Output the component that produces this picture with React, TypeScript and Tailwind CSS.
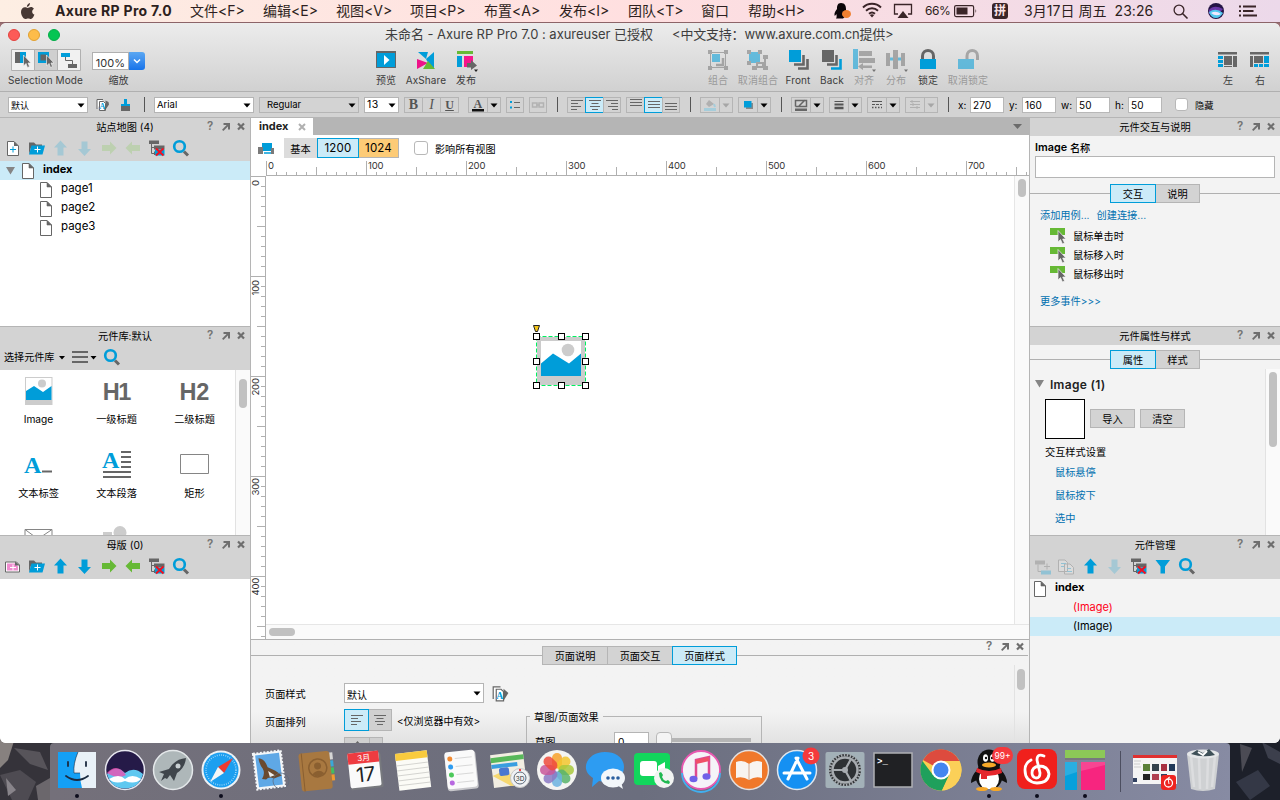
import React from 'react';

const BLUE = '#009dd9';
const DARK = '#666666';
const GREEN = '#66b935';

type Kids = { children?: React.ReactNode };

/* ---------- shared pieces ---------- */

function Slot({ c, children }: Kids & { c: string }) {
  return <div className={'shrink-0 ' + c}>{children}</div>;
}

function Ico({ b, children }: Kids & { b: [number, number, number, number] }) {
  return (
    <svg className="block shrink-0" width={b[2]} height={b[3]} viewBox={b.join(' ')} fill="none">
      {children}
    </svg>
  );
}

const MiniPage = () => (
  <svg className="block shrink-0" width="12" height="16" viewBox="0 0 12 16">
    <path d="M.5 .5H7L11.5 5V15.5H.5Z" fill="#fff" stroke={DARK} />
    <path d="M7 .5V5H11.5Z" fill={DARK} stroke={DARK} strokeWidth=".6" />
  </svg>
);

const WinButtons = () => (
  <Ico b={[0, 0, 48, 18]}>
    <text x="5" y="12" fontSize="11.500" fontWeight="600" fill="#757575">?</text>
    <path d="M20.700 12.300L26 7" stroke="#6e6e6e" strokeWidth="1.800" />
    <path d="M21.500 5H28V11.500H26V7H21.500Z" fill="#6e6e6e" />
    <path d="M36 5.500L42 11.500M42 5.500L36 11.500" stroke="#6e6e6e" strokeWidth="2.200" />
  </Ico>
);

function TitleBar({ children }: Kids) {
  return (
    <div className="flex h-[18px] shrink-0 items-center bg-[#d3d3d3] pl-12">
      <div className="flex-1 text-center text-[10.200px] text-black">{children}</div>
      <WinButtons />
    </div>
  );
}

function ToolIcon({ children, faded }: Kids & { faded?: boolean }) {
  return (
    <svg className={faded ? 'block shrink-0 opacity-30' : 'block shrink-0'} width="24" height="25" viewBox="-12 -12.5 24 25" fill="none">
      {children}
    </svg>
  );
}

const NewPage = () => (
  <ToolIcon>
    <path d="M-4.500 -7H2L6.500 -2.500V7H-4.500Z" fill="#fff" stroke={DARK} />
    <path d="M2 -7V-2.500H6.500Z" fill={DARK} />
    <path d="M-2 1H4M1 -2V4" stroke={BLUE} />
  </ToolIcon>
);
const NewMaster = () => (
  <ToolIcon>
    <path d="M-6.500 -4.500H4.500L7.500 -1.500V5.500H-6.500Z" fill="#fff" stroke={DARK} />
    <path d="M-5 -3H3.500L6 0V4H-5Z" fill="#f08cd0" />
    <path d="M3 -5V-1H8Z" fill={DARK} />
    <path d="M-2 1H4M1 -2V4" stroke="#fff" />
  </ToolIcon>
);
const NewFolder = () => (
  <ToolIcon>
    <path d="M-7 -6H-2L0 -4H6V-1H-5L-7 6Z" fill={DARK} />
    <path d="M-4.500 -3H9L6.500 6H-7Z" fill={BLUE} />
    <path d="M-1.500 1H4.500M1.500 -2V4" stroke="#fff" />
  </ToolIcon>
);
const Up = ({ off }: { off?: boolean }) => (
  <ToolIcon><path d="M.5 -8L7 -1H3.500V7H-2.500V-1H-6Z" fill={off ? '#a5c8d4' : BLUE} /></ToolIcon>
);
const Down = ({ off }: { off?: boolean }) => (
  <ToolIcon><path d="M.5 7.500L7 .5H3.500V-7H-2.500V.5H-6Z" fill={off ? '#a5c8d4' : BLUE} /></ToolIcon>
);
const Right = ({ off }: { off?: boolean }) => (
  <ToolIcon><path d="M8.500 -.5L2 -7V-3.500H-6V2.500H2V6Z" fill={off ? '#bdd0b0' : GREEN} /></ToolIcon>
);
const Left = ({ off }: { off?: boolean }) => (
  <ToolIcon><path d="M-6.500 -.5L0 -7V-3.500H8V2.500H0V6Z" fill={off ? '#bdd0b0' : GREEN} /></ToolIcon>
);
const Delete = () => (
  <ToolIcon>
    <path d="M-7 -8H3V-4.500H-7Z" fill={DARK} />
    <path d="M-4.500 -4.500V5H-2M-4.500 -1H-1" stroke={DARK} />
    <path d="M-2 -3H8.500V1H-2ZM-2 3H0V6.500H-2Z" fill={DARK} />
    <path d="M-1 1H8.500V7H-1Z" fill={BLUE} />
    <path d="M0 0L7.500 7M7.500 0L0 7" stroke="#f01020" strokeWidth="2" />
  </ToolIcon>
);
const Find = () => (
  <ToolIcon>
    <path d="M4 3L8 7" stroke={DARK} strokeWidth="3" />
    <circle cx="-.5" cy="-2" r="5.300" stroke={BLUE} strokeWidth="2.600" />
  </ToolIcon>
);

const Bar = ({ children }: Kids) => (
  <div className="flex h-[25px] shrink-0 items-center bg-[#d3d3d3]">{children}</div>
);

/* ---------- macOS menu bar ---------- */

function MenuBar() {
  return (
    <div className="flex h-[23px] shrink-0 items-center border-b border-[#8c6468] bg-linear-to-r from-[#fdeee3] via-[#ffdfe0] to-[#ecd9ea] text-[14px] text-[#2d1f20]">
      <Slot c="w-[55px] pl-[20px]">
        <svg width="15" height="17" viewBox="0 0 15 17" fill="#473834">
          <path d="M10 0C10 2 8.600 3.800 6.900 3.900C6.700 2.200 8.300 .3 10 0ZM1 9C1 5.800 3 4.200 4.900 4.200C6.100 4.200 6.900 4.900 7.700 4.900C8.500 4.900 9.500 4.100 11 4.100C12 4.100 13.200 4.700 13.900 5.700C11.400 7.200 11.800 10.600 14.400 11.600C13.800 13.400 12.400 16 10.900 16C9.900 16 9.500 15.400 8.200 15.400C6.900 15.400 6.400 16 5.500 16C3.500 16 1 12.400 1 9Z" />
        </svg>
      </Slot>
      <Slot c="w-[135px] text-[14px] font-bold tracking-[0.300px]">Axure RP Pro 7.0</Slot>
      <Slot c="w-[73px]">文件&lt;F&gt;</Slot>
      <Slot c="w-[73px]">编辑&lt;E&gt;</Slot>
      <Slot c="w-[74px]">视图&lt;V&gt;</Slot>
      <Slot c="w-[74px]">项目&lt;P&gt;</Slot>
      <Slot c="w-[75px]">布置&lt;A&gt;</Slot>
      <Slot c="w-[69px]">发布&lt;I&gt;</Slot>
      <Slot c="w-[73px]">团队&lt;T&gt;</Slot>
      <Slot c="w-[47px]">窗口</Slot>
      <Slot c="w-[82px]">帮助&lt;H&gt;</Slot>
      <Ico b={[830, 0, 95, 22]}>
        <path d="M841 3C837.500 3 837 6 837 9C835.500 11 834 13 834.500 15.500C835 16 836 15 836.500 14C836.500 16 837 17 836 18.500H843L846 16V9C846 6 845 3 841 3Z" fill="#0b0508" />
        <ellipse cx="846.500" cy="14" rx="4.500" ry="4" fill="#f08030" />
        <path d="M863 7.500C868 2.500 876 2.500 881 7.500M866 10.700C869.500 7.500 874.500 7.500 878 10.700M869 13.700C871 12 873 12 875 13.700" stroke="#3a2528" strokeWidth="1.900" />
        <path d="M869.800 15Q872 13.300 874.200 15L872 17.500Z" fill="#3a2528" />
        <path d="M898 14H894.500V4.500H911.500V14H908" stroke="#3a2528" strokeWidth="1.300" />
        <path d="M903 11L908.500 18H897.500Z" fill="#3a2528" />
      </Ico>
      <Slot c="w-[29px] text-[12px] tracking-[-0.4px]">66%</Slot>
      <Ico b={[954, 0, 38, 22]}>
        <rect x="954.600" y="5.600" width="19" height="11" rx="1.500" stroke="#3a2528" strokeWidth="1.200" />
        <rect x="956.500" y="7.500" width="11" height="7" fill="#3a2528" />
        <path d="M975.500 9V13Q977 11 975.500 9Z" fill="#3a2528" />
      </Ico>
      <Slot c="w-[32px]">
        <div className="flex size-4 items-center justify-center rounded-[3px] bg-[#3a2528] text-[12px] font-bold text-[#fbe3e6]">拼</div>
      </Slot>
      <Slot c="w-[148px] tracking-[0.050px]">3月17日 周五&nbsp; 23:26</Slot>
      <Ico b={[1172, 0, 108, 22]}>
        <circle cx="1179" cy="10" r="4.900" stroke="#3a2528" strokeWidth="1.300" />
        <path d="M1182.500 13.500L1187.500 18.500" stroke="#3a2528" strokeWidth="1.600" />
        <circle cx="1216" cy="11" r="8" fill="#241445" />
        <path d="M1209 10Q1214 4 1223 9Q1220 14 1209 14Z" fill="#6a38a8" />
        <path d="M1209 12Q1216 7 1223 13Q1220 18 1216 18Q1211 18 1209 12Z" fill="#52c8ee" />
        <path d="M1211 13Q1216 10 1221 14Q1216 17 1211 13Z" fill="#f0e8ff" />
        <path d="M1239 6.500H1241M1243 6.500H1256M1239 11H1241M1243 11H1253.500M1239 15.500H1241M1243 15.500H1257" stroke="#3a2528" strokeWidth="1.800" />
      </Ico>
    </div>
  );
}

/* ---------- window title + main toolbar ---------- */

function Tool({ w, b, label, off, children }: Kids & { w: string; b: [number, number, number, number]; label: string; off?: boolean }) {
  return (
    <div className={'flex shrink-0 flex-col items-center ' + w}>
      <div className={off ? 'opacity-55' : ''}><Ico b={b}>{children}</Ico></div>
      <div className={'flex h-[15px] items-center justify-center text-[10px] tracking-[0.100px] ' + (off ? 'text-[#9a9a9a]' : 'text-[#3c3c3c]')}>{label}</div>
    </div>
  );
}

function Toolbar() {
  return (
    <div className="flex h-[69px] shrink-0 flex-col rounded-t-[6px] border-b border-[#b0b0b0] bg-linear-to-b from-[#ececec] to-[#d1d1d1]">
      <div className="flex h-[23px] items-center text-[13px] text-[#3e3e3e]">
        <div className="flex w-[385px] shrink-0 gap-2 pl-2">
          <div className="size-3 rounded-full border border-[#e2443f] bg-[#fc5b57]" />
          <div className="size-3 rounded-full border border-[#e0a032] bg-[#fdbc4a]" />
          <div className="size-3 rounded-full border border-[#04ac48] bg-[#05c553]" />
        </div>
        <Slot c="w-[287px] tracking-[-0.030px]">未命名 - Axure RP Pro 7.0 : axureuser 已授权</Slot>
        <Slot c="w-[300px] tracking-[-0.200px]">&lt;中文支持：www.axure.com.cn提供&gt;</Slot>
      </div>
      <div className="flex h-[45px]">
        <Tool w="w-[91px]" b={[0, 46, 91, 26]} label="Selection Mode">
          <path d="M11.500 49.500H80.500V70.500H11.500Z" fill="#f1f1f1" stroke="#b0b0b0" />
          <path d="M34.500 49.500H57.500V70.500H34.500Z" fill="#cfcfcf" stroke="#b0b0b0" />
          <path d="M15 52H20V63H15Z" fill={DARK} /><path d="M20 52H26V63H20Z" fill={BLUE} />
          <path d="M38 52H49V63H38Z" fill={BLUE} /><path d="M40.500 54.500H46.500V60.500H40.500Z" fill={DARK} />
          <path d="M23.500 55V66L26 63.500L27.500 67.500L29.500 66.500L28 63H31Z" fill={DARK} stroke="#eee" strokeWidth=".7" />
          <path d="M46.500 55V66L49 63.500L50.500 67.500L52.500 66.500L51 63H54Z" fill={DARK} stroke="#eee" strokeWidth=".7" />
          <path d="M61 53H70V57H61Z" fill={BLUE} /><path d="M65.500 57V60.500H72.500V64" stroke={DARK} /><path d="M68 64H77V68H68Z" fill={DARK} />
        </Tool>
        <div className="flex w-[55px] shrink-0 flex-col items-center">
          <div className="flex h-[29px] items-center">
            <div className="flex h-[18px] w-[53px] items-stretch text-[11px] text-[#333]">
              <div className="flex flex-1 items-end justify-end border border-[#b0b0b0] bg-white pr-[3px]">100%</div>
              <div className="flex w-4 items-center justify-center rounded-r-[3px] bg-linear-to-b from-[#5aa7f2] to-[#1573ea]">
                <Ico b={[0, 0, 8, 6]}><path d="M1 1.500L4 4.500L7 1.500" stroke="#fff" strokeWidth="1.500" /></Ico>
              </div>
            </div>
          </div>
          <div className="-mt-[3px] flex h-[15px] items-center text-[10px] text-[#3c3c3c]">缩放</div>
        </div>
        <Slot c="w-[220px]" />
        <Tool w="w-10" b={[366, 46, 40, 26]} label="预览">
          <path d="M376 51H396V68H376Z" fill={BLUE} /><path d="M376 51H396V53H376Z" fill={DARK} /><path d="M376.500 51.500H395.500V67.500H376.500Z" stroke={DARK} />
          <path d="M384 55V65L389.500 60Z" fill="#fff" />
        </Tool>
        <Tool w="w-10" b={[406, 46, 40, 26]} label="AxShare">
          <path d="M418 52H428L426 59Z" fill={BLUE} /><path d="M426 59L434 52V69L427 61Z" fill={BLUE} />
          <path d="M417 59L428 63L417 69Z" fill="#ee1289" /><path d="M428 61L435 69H423Z" fill={GREEN} />
        </Tool>
        <Tool w="w-10" b={[446, 46, 40, 26]} label="发布">
          <path d="M457 51H473V54H457Z" fill={GREEN} /><path d="M457 56H462V67H457Z" fill={BLUE} /><path d="M464 56H473V67H464Z" fill="#f5158c" />
          <path d="M467 63H471V60L477 65.500L471 70V67.500H467Z" fill={DARK} /><path d="M474 69.500H478L476 72Z" fill="#222" />
        </Tool>
        <Slot c="w-[212px]" />
        <Tool w="w-10" b={[698, 46, 40, 26]} label="组合" off>
          <path d="M710.500 52.500H725.500V67.500H710.500Z" stroke="#777" /><path d="M708 50H712V54H708ZM724 50H728V54H724ZM708 66H712V70H708ZM724 66H728V70H724Z" fill="#777" />
          <path d="M712 54H720V62H712Z" fill={BLUE} /><path d="M716 65H723V58" stroke="#777" strokeWidth="2.500" />
        </Tool>
        <Tool w="w-10" b={[738, 46, 40, 26]} label="取消组合" off>
          <path d="M749 52H760V63H749Z" fill={BLUE} /><path d="M747 50H751V54H747ZM758 50H762V54H758ZM747 61H751V65H747ZM763 55H768V59H763ZM752 66H757V70H752ZM763 66H768V70H763Z" fill="#777" />
          <path d="M754 67H765V57M757 67V63H763V67" stroke="#777" strokeWidth="2" />
        </Tool>
        <Tool w="w-10" b={[778, 46, 40, 26]} label="Front">
          <path d="M789 50H801V62H789Z" fill={BLUE} />
          <path d="M794 64.500H803.500V55M798 68.500H807.500V59" stroke={DARK} strokeWidth="2.600" />
        </Tool>
        <Tool w="w-[28px]" b={[818, 46, 28, 26]} label="Back">
          <path d="M822 50H834V62H822Z" fill={DARK} />
          <path d="M827 64.500H836.500V55" stroke={DARK} strokeWidth="2.600" /><path d="M831 68.500H840.500V59" stroke={BLUE} strokeWidth="2.600" />
        </Tool>
        <Tool w="w-[36px]" b={[846, 46, 36, 26]} label="对齐" off>
          <path d="M853 49H858V69H853Z" fill={BLUE} /><path d="M859 51H872V56H859ZM859 58H875V63H859ZM858 66.500L863 63V65.500H872V68H863V70Z" fill="#777" /><path d="M872 69.500H876L874 72Z" fill="#222" />
        </Tool>
        <Tool w="w-[28px]" b={[882, 46, 28, 26]} label="分布" off>
          <path d="M886 53H890V66H886ZM893 50H898V69H893ZM901 53H905V66H901Z" fill="#777" /><path d="M890 59H893M898 59H901" stroke={BLUE} strokeWidth="3" /><path d="M904 69.500H908L906 72Z" fill="#222" />
        </Tool>
        <Tool w="w-[36px]" b={[910, 46, 36, 26]} label="锁定">
          <path d="M922.500 60V56C922.500 48.500 933.500 48.500 933.500 56V60" stroke={DARK} strokeWidth="3" /><path d="M920 59H936V69H920Z" fill={BLUE} />
        </Tool>
        <Tool w="w-[44px]" b={[946, 46, 44, 26]} label="取消锁定" off>
          <path d="M967 60V56C967 48.500 977.500 48.500 977.500 56V60" stroke="#777" strokeWidth="3" /><path d="M958 59H974V69H958Z" fill={BLUE} />
        </Tool>
        <Slot c="w-[222px]" />
        <Tool w="w-8" b={[1212, 46, 32, 26]} label="左">
          <path d="M1218 52H1237V54.500H1218ZM1224 56H1232V65H1224ZM1233 56H1237V67H1233ZM1224 66H1232V67H1224Z" fill={DARK} /><path d="M1218 56H1223V59H1218ZM1218 60H1223V63H1218ZM1218 64H1223V67H1218Z" fill={BLUE} />
        </Tool>
        <Tool w="w-8" b={[1244, 46, 32, 26]} label="右">
          <path d="M1250 52H1269V54.500H1250ZM1250 56H1253V67H1250ZM1254 56H1263V63H1254Z" fill={DARK} /><path d="M1264 56H1269V63H1264ZM1254 64H1258V67H1254ZM1259 64H1263V67H1259ZM1264 64H1269V67H1264Z" fill={BLUE} />
        </Tool>
      </div>
    </div>
  );
}

/* ---------- formatting bar ---------- */

const Caret = ({ off }: { off?: boolean }) => (
  <svg className="block shrink-0" width="8" height="5" viewBox="0 0 8 5"><path d="M.5 .5H7.500L4 4.500Z" fill={off ? '#a6a6a6' : '#000'} /></svg>
);

function Select({ c, children }: Kids & { c: string }) {
  return (
    <div className={'flex h-4 shrink-0 items-center justify-between border border-[#b5b5b5] pr-[2px] pt-px text-black ' + c}>
      <span>{children}</span>
      <Caret />
    </div>
  );
}

function Btn({ c, children }: Kids & { c: string }) {
  return <div className={'flex h-4 shrink-0 items-center justify-center border ' + c}>{children}</div>;
}

const Lines = ({ d, s = '#666' }: { d: string; s?: string }) => (
  <Ico b={[0, 0, 14, 14]}><path d={d} stroke={s} /></Ico>
);

function Split({ c, off, children }: Kids & { c: string; off?: boolean }) {
  return (
    <div className={'flex h-4 w-[33px] shrink-0 border border-[#b5b5b5] ' + c}>
      <div className="flex w-[19px] shrink-0 items-center justify-center border-r border-[#b5b5b5]">{children}</div>
      <div className="flex flex-1 items-center justify-center pt-px"><Caret off={off} /></div>
    </div>
  );
}

const Sep = ({ c }: { c: string }) => <div className={'h-[15px] w-px shrink-0 bg-[#555] ' + c} />;

const StyleIcon = () => (
  <Ico b={[0, 0, 14, 14]}>
    <path d="M1 11V1.500H7M3.500 3.500H7.500L9.500 5.500V12.500H3.500Z" stroke={DARK} fill="#fff" />
    <path d="M12.500 4L9.500 2.500V6L8 12.500L10 11L13 6.500Z" fill={DARK} />
    <text x="3.500" y="11" fontSize="8" fontWeight="700" fill={BLUE} fontFamily="Liberation Serif">A</text>
  </Ico>
);

function FormatBar() {
  const off = 'border-[#b5b5b5]';
  const on = 'border-[#009dd9] bg-[#cbebf8]';
  return (
    <div className="flex h-[26px] shrink-0 items-center border-b border-[#b5b5b5] bg-[#d3d3d3] pl-2">
      <Select c="w-20 bg-white pl-[2px] text-[9px]">默认</Select>
      <div className="ml-2 w-6"><StyleIcon /></div>
      <Ico b={[120, 98, 14, 14]}>
        <path d="M124 99H127V104H124Z" fill={BLUE} /><path d="M121 104H130V111H121Z" fill={DARK} /><path d="M121 104H130V106H121Z" fill={BLUE} />
      </Ico>
      <Sep c="ml-[10px]" />
      <Select c="ml-[9px] w-[100px] bg-white pl-[2px] text-[9.500px]">Arial</Select>
      <Select c="ml-[5px] w-[100px] pl-[7px] text-[9.500px]">Regular</Select>
      <Select c="ml-[5px] w-[35px] bg-white pl-[2px] text-[10.500px] tracking-[0.500px]">13</Select>
      <Btn c={'ml-[5px] w-[19px] ' + off}><b className="font-['Liberation_Serif'] text-[14px] text-[#555]">B</b></Btn>
      <Btn c={'-ml-px w-[19px] ' + off}><i className="font-['Liberation_Serif'] text-[14px] text-[#555]">I</i></Btn>
      <Btn c={'-ml-px w-[19px] ' + off}><u className="font-['Liberation_Serif'] text-[12px] font-bold text-[#555]">U</u></Btn>
      <Split c="ml-[9px]">
        <Ico b={[0, 0, 14, 14]}><text x="2.500" y="9.500" fontSize="12" fontWeight="700" fill="#555" fontFamily="Liberation Serif">A</text><path d="M1 11H13V13.500H1Z" fill="#111" /></Ico>
      </Split>
      <Btn c={'ml-[5px] w-[18px] ' + off}>
        <Ico b={[0, 0, 14, 14]}><path d="M2 4H4M2 9.500H4" stroke={BLUE} strokeWidth="2.200" /><path d="M6 4.500H12M6 9.500H12" stroke={DARK} /></Ico>
      </Btn>
      <Btn c={'ml-[5px] w-[18px] ' + off}>
        <Ico b={[0, 0, 14, 14]}><path d="M1.500 5H6V9H1.500ZM8 5H12.500V9H8ZM5 7H9" stroke="#b2b2b2" strokeWidth="1.500" /></Ico>
      </Btn>
      <Sep c="ml-[10px]" />
      <Btn c={'ml-[9px] w-[19px] ' + off}><Lines d="M1 2.500H13M1 5.500H8M1 8.500H11M1 11.500H7" /></Btn>
      <Btn c={'-ml-px w-[19px] ' + on}><Lines d="M1 2.500H13M3.500 5.500H10.500M2 8.500H12M4 11.500H10" /></Btn>
      <Btn c={'-ml-px w-[18px] ' + off}><Lines d="M1 2.500H13M6 5.500H13M3 8.500H13M7 11.500H13" /></Btn>
      <Btn c={'ml-[5px] w-[19px] ' + off}><Lines d="M1 1.500H13M1 4.500H13M1 7.500H13" /></Btn>
      <Btn c={'-ml-px w-[19px] ' + on}><Lines d="M1 3.500H13M1 6.500H13M1 9.500H13" /></Btn>
      <Btn c={'-ml-px w-[18px] ' + off}><Lines d="M1 5.500H13M1 8.500H13M1 11.500H13" /></Btn>
      <Sep c="ml-[10px]" />
      <Split c="ml-[9px]" off>
        <Ico b={[0, 0, 14, 14]}><path d="M6 2L11 6L6 9L3 6Z" fill="#b0b0b0" /><path d="M1 10H13V13H1Z" fill="#a5cddb" /><path d="M11 6L12 9" stroke="#a5cddb" strokeWidth="2" /></Ico>
      </Split>
      <Split c="ml-[5px]">
        <Ico b={[0, 0, 14, 14]}><path d="M5 5H12V11H5Z" fill="#888" /><path d="M3 3H10.500V9.500H3Z" fill={BLUE} /></Ico>
      </Split>
      <Sep c="ml-[10px]" />
      <Split c="ml-[9px]">
        <Ico b={[0, 0, 14, 14]}><path d="M1.500 8.500V2.500H12.500V8.500H1.500M5 8L11 2" stroke={DARK} strokeWidth="1.500" /><path d="M1 10.500H13V13H1Z" fill={DARK} /></Ico>
      </Split>
      <Split c="ml-[5px]">
        <Ico b={[0, 0, 14, 14]}><path d="M2.500 3.500H11.500" stroke="#555" /><path d="M2.500 6.500H11.500" stroke="#555" strokeWidth="2" /><path d="M2.500 10H11.500" stroke="#555" strokeWidth="2.600" /></Ico>
      </Split>
      <Split c="ml-[5px]">
        <Ico b={[0, 0, 14, 14]}><path d="M2 3.500H12" stroke="#555" /><path d="M2 6.500H12" stroke="#555" strokeDasharray="3 1" /><path d="M2 9.500H12" stroke="#555" strokeWidth="1.500" strokeDasharray="1.500 1.500" /></Ico>
      </Split>
      <Split c="ml-[5px]" off>
        <Ico b={[0, 0, 14, 14]}><path d="M2 3.500H12M2 6.500H12M2 9.500H12M4 2V5M9 8V11M5 5V8" stroke="#b0b0b0" /></Ico>
      </Split>
      <Sep c="ml-[10px]" />
      <div className="flex items-center text-[10px] text-black">
        <Slot c="ml-[9px] w-3">x:</Slot><Field>270</Field>
        <Slot c="ml-[5px] w-[13px]">y:</Slot><Field>160</Field>
        <Slot c="ml-[5px] w-[15px]">w:</Slot><Field>50</Field>
        <Slot c="ml-[5px] w-[13px]">h:</Slot><Field>50</Field>
        <div className="ml-[13px] size-[13px] shrink-0 rounded-[3px] border border-[#b8b8b8] bg-white" />
        <Slot c="ml-[7px] pt-[2px] text-[9.200px]">隐藏</Slot>
      </div>
    </div>
  );
}

function Field({ children }: Kids) {
  return <div className="flex h-4 w-[34px] shrink-0 items-center border border-[#b8b8b8] bg-white pl-[2px] text-[10px] tracking-[0.100px]">{children}</div>;
}

/* ---------- left column ---------- */

function LibCell({ w, label, children }: Kids & { w: string; label: string }) {
  return (
    <div className={'flex h-[74px] shrink-0 flex-col items-center pt-px ' + w}>
      <svg className="block" width="48" height="39" viewBox="-24 -19 48 39" fill="none">{children}</svg>
      <div className="flex h-[19px] items-center text-[10.200px] text-black">{label}</div>
    </div>
  );
}

const TreePage = ({ name }: { name: string }) => (
  <div className="flex h-[19px] items-center pl-10"><MiniPage /><span className="-mt-[2px] ml-[9px]">{name}</span></div>
);

function LeftColumn() {
  return (
    <div className="flex w-[251px] shrink-0 flex-col border-r border-[#b5b5b5] bg-white">
      <TitleBar>站点地图 (4)</TitleBar>
      <Bar><NewPage /><NewFolder /><Up off /><Down off /><Right off /><Left off /><Delete /><Find /></Bar>
      <div className="flex h-[165px] shrink-0 flex-col text-[11.500px] text-black">
        <div className="flex h-[19px] items-center bg-[#cbebf8] pl-[6px] font-bold">
          <svg className="mr-[7px] block" width="9" height="8"><path d="M0 0H9L4.500 7.500Z" fill="#858585" /></svg>
          <MiniPage /><span className="-mt-[2px] ml-[9px] text-[11px]">index</span>
        </div>
        <TreePage name="page1" /><TreePage name="page2" /><TreePage name="page3" />
      </div>
      <div className="h-px shrink-0 bg-[#b5b5b5]" />
      <TitleBar>元件库:默认</TitleBar>
      <Bar>
        <Slot c="w-[57px] pl-1 text-[10.100px]">选择元件库</Slot>
        <Ico b={[57, 345, 43, 25]}>
          <path d="M59 356H65L62 359.500ZM90.500 356H96.500L93.500 359.500Z" fill="#000" /><path d="M72 352H88M72 357H88M72 362H88" stroke={DARK} strokeWidth="2" />
        </Ico>
        <div className="-ml-px"><Find /></div>
      </Bar>
      <div className="flex h-[165px] shrink-0 overflow-hidden">
        <div className="flex w-[235px] flex-wrap content-start">
          <LibCell w="w-[77px]" label="Image">
            <path d="M-14 -13H13.500V15H-14Z" fill="#ccc" /><path d="M-13 -12H12.500V10H-13Z" fill="#fff" /><circle cx="3" cy="-6.500" r="4" fill="#ccc" />
            <path d="M-13 1L-5 -4L4 2L12.500 -4V10H-13Z" fill={BLUE} />
          </LibCell>
          <LibCell w="w-[79px]" label="一级标题"><text y="9.500" x="-.7" textAnchor="middle" fontSize="23.500" fontWeight="700" fill={DARK} fontFamily="Liberation Sans" letterSpacing="-1.500">H1</text></LibCell>
          <LibCell w="w-[77px]" label="二级标题"><text y="9.500" x="-.7" textAnchor="middle" fontSize="23.500" fontWeight="700" fill={DARK} fontFamily="Liberation Sans" letterSpacing="-.3">H2</text></LibCell>
          <LibCell w="w-[77px]" label="文本标签"><text x="-15" y="9" fontSize="24" fontWeight="700" fill={BLUE} fontFamily="Liberation Serif">A</text><path d="M3 7.500H13" stroke={DARK} strokeWidth="2" /></LibCell>
          <LibCell w="w-[79px]" label="文本段落"><text x="-15" y="4" fontSize="24" fontWeight="700" fill={BLUE} fontFamily="Liberation Serif">A</text><path d="M4 -12H14M4 -7H14M4 -2H14M4 3H14M-14 8H14M-14 13H14" stroke={DARK} strokeWidth="2" /></LibCell>
          <LibCell w="w-[77px]" label="矩形"><path d="M-14.500 -9.500H13.500V9.500H-14.500Z" fill="#fff" stroke="#858585" /></LibCell>
          <LibCell w="w-[77px]" label=""><path d="M-14 -8.500H13V11H-14ZM-14 -8.500L-1 1L13 -8.500" stroke="#858585" /></LibCell>
          <LibCell w="w-[79px]" label=""><circle cx="3" cy="-5.500" r="6.500" fill="#ccc" /><path d="M-14 -6H-5V4H-14Z" fill="#ccc" /></LibCell>
        </div>
        <div className="w-[15px] border-l border-[#e2e2e2] bg-[#fafafa] pl-[3px] pt-[9px]"><div className="h-[29px] w-2 rounded-full bg-[#c1c1c1]" /></div>
      </div>
      <div className="h-px shrink-0 bg-[#b5b5b5]" />
      <TitleBar>母版 (0)</TitleBar>
      <Bar><NewMaster /><NewFolder /><Up /><Down /><Right /><Left /><Delete /><Find /></Bar>
    </div>
  );
}

/* ---------- centre column ---------- */

const H_TICKS = Array.from({ length: 77 }, (_, i) => i);
const V_TICKS = Array.from({ length: 47 }, (_, i) => i);

function TabLine({ children }: Kids) {
  return (
    <div className="flex h-[19px] shrink-0 items-center">
      <div className="h-px flex-1 bg-[#b0b0b0]" />
      {children}
      <div className="h-px flex-1 bg-[#b0b0b0]" />
    </div>
  );
}

function Tab({ w, on, children }: Kids & { w: string; on?: boolean }) {
  return (
    <div className={'flex h-[19px] shrink-0 items-center justify-center border pt-[2px] text-[10.200px] text-black ' + w + (on ? ' z-10 border-[#009dd9] bg-[#cbebf8]' : ' border-[#b5b5b5] bg-[#d3d3d3]')}>
      {children}
    </div>
  );
}

function Centre() {
  return (
    <div className="flex w-[778px] shrink-0 flex-col bg-white">
      <div className="flex h-[17px] shrink-0 items-center bg-[#b5b5b5]">
        <div className="flex h-full w-[62px] items-center bg-white pl-2 text-[11px] font-bold text-[#222]">
          index
          <svg className="ml-[10px] block" width="8" height="8"><path d="M1 1L7 7M7 1L1 7" stroke="#b0b0b0" strokeWidth="2" /></svg>
        </div>
        <svg className="ml-auto mr-[7px] block" width="9" height="5"><path d="M0 0H9L4.500 5Z" fill="#6b6b6b" /></svg>
      </div>
      <div className="flex h-[26px] shrink-0 items-center pl-[7px] text-[12px] text-black">
        <Ico b={[258, 141, 16, 13]}>
          <path d="M262 142H272V150H262Z" fill={BLUE} /><path d="M264 152H271" stroke={BLUE} strokeWidth="1.500" /><path d="M258 146H263V153H258ZM271 147H274V153H271Z" fill="#7a7a7a" />
        </Ico>
        <div className="ml-[10px] flex h-[20px] w-[33px] items-center justify-center bg-[#dcdcdc] pt-[2px] text-[10.200px]">基本</div>
        <div className="flex h-[20px] w-[42px] items-center justify-center border border-[#009dd9] bg-[#cbebf8] pt-px text-[11.500px] tracking-[0.200px]">1200</div>
        <div className="flex h-[20px] w-[40px] items-center justify-center border border-l-0 border-[#b5b5b5] bg-[#fdcb76] pt-px text-[11.500px] tracking-[0.200px]">1024</div>
        <div className="ml-[15px] size-[14px] rounded-[3px] border border-[#b8b8b8] bg-white" />
        <span className="ml-[7px] pt-[3px] text-[10.100px]">影响所有视图</span>
      </div>
      <div className="h-[15px] shrink-0 pl-[15px]">
        <Ico b={[0, 0, 763, 15]}>
          <path d="M0 14.500H763" stroke="#b0b0b0" />
          {H_TICKS.map((i) => (
            <path key={i} d={`M${i * 10 + 0.5} ${i % 10 === 0 ? 0 : i % 5 === 0 ? 6 : 11}V15`} stroke="#b0b0b0" />
          ))}
          {[0, 100, 200, 300, 400, 500, 600, 700].map((n) => (
            <text key={n} x={n + 2} y="8" fontSize="9.500" fill="#333" letterSpacing="-.2">{n}</text>
          ))}
        </Ico>
      </div>
      <div className="flex h-[463px] shrink-0">
        <Ico b={[0, 0, 15, 463]}>
          <path d="M14.500 0V463" stroke="#b0b0b0" />
          {V_TICKS.map((i) => (
            <path key={i} d={`M${i % 10 === 0 ? 0 : i % 5 === 0 ? 6 : 10} ${i * 10 + 0.5}H15`} stroke="#b0b0b0" />
          ))}
          <text transform="translate(8 10) rotate(-90)" fontSize="9.500" fill="#333" letterSpacing="-.2">0</text>
          {[100, 200, 300, 400].map((n) => (
            <text key={n} transform={`translate(8 ${n + 19.5}) rotate(-90)`} fontSize="9.500" fill="#333" letterSpacing="-.2">{n}</text>
          ))}
        </Ico>
        <div className="flex flex-1 flex-col">
          <div className="flex h-[448px] shrink-0">
            <div className="relative flex-1 bg-white">
              <svg className="absolute left-[262px] top-[144px]" width="70" height="72" viewBox="528 320 70 72" fill="none">
                <path d="M533.500 325.500H539.500L537.500 331.500H535.500Z" fill="#f5c518" stroke="#222" />
                <path d="M536 336H586V386H536Z" fill="#ccc" /><path d="M541 341H581V376H541Z" fill="#fff" /><circle cx="568" cy="350" r="6.300" fill="#ccc" />
                <path d="M541 363.500L553 353.500L569 363.500L581 353.500V376H541Z" fill={BLUE} />
                <path d="M536.500 336.500H585.500V385.500H536.500Z" stroke="#fff" /><path d="M536.500 336.500H585.500V385.500H536.500Z" stroke="#00f060" strokeDasharray="4 2" />
                {[[536, 336], [561, 336], [585, 336], [536, 361], [585, 361], [536, 385], [561, 385], [585, 385]].map(([x, y]) => (
                  <rect key={x + '-' + y} x={x - 2.5} y={y - 2.5} width="6" height="6" fill="#fff" stroke="#000" />
                ))}
              </svg>
            </div>
            <div className="w-[15px] border-l border-[#e6e6e6] bg-[#fafafa] pl-[3px] pt-[3px]"><div className="h-[18px] w-2 rounded-full bg-[#c1c1c1]" /></div>
          </div>
          <div className="h-[15px] border-t border-[#e6e6e6] bg-[#fafafa] pl-[3px] pt-[3px]"><div className="h-2 w-[26px] rounded-full bg-[#c1c1c1]" /></div>
        </div>
      </div>
      <PageInspector />
    </div>
  );
}

function PageInspector() {
  return (
    <div className="flex flex-1 flex-col overflow-hidden border-t border-[#b0b0b0] bg-linear-to-b from-[#f3f3f3] from-70% to-[#e2e2e2] text-[10.200px] text-black">
      <div className="flex h-[6px] shrink-0 justify-end"><div className="-mt-[2px] h-[18px]"><WinButtons /></div></div>
      <div className="pr-px"><TabLine><Tab w="w-[66px]">页面说明</Tab><Tab w="-ml-px w-[66px]">页面交互</Tab><Tab w="-ml-px w-[65px]" on>页面样式</Tab></TabLine></div>
      <div className="flex flex-1">
        <div className="flex w-[275px] shrink-0 flex-col pl-[14px] pt-[18px]">
          <div className="flex h-5 items-center">
            <Slot c="w-[79px] pt-[3px]">页面样式</Slot>
            <div className="flex h-5 w-[140px] items-center justify-between border border-[#b5b5b5] bg-white pl-[2px] pr-[2px] pt-px"><span className="pt-[2px] text-[10px]">默认</span><Caret /></div>
            <div className="ml-2"><svg width="17" height="17" viewBox="0 0 14 14" fill="none"><path d="M1 11.500V1.500H7M3.500 3.500H7.500L9.500 5.500V13H3.500Z" stroke={DARK} fill="#fff" /><path d="M9.500 3L13.500 6.500L9.500 13Z" fill={DARK} /><text x="3.500" y="11.500" fontSize="8" fontWeight="700" fill={BLUE} fontFamily="Liberation Serif">A</text></svg></div>
          </div>
          <div className="mt-[6px] flex h-[22px] items-center">
            <Slot c="w-[79px] pt-[5px]">页面排列</Slot>
            <div className="z-10 flex h-[22px] w-[25px] items-center justify-center border border-[#009dd9] bg-[#cbebf8]"><Lines d="M1 2.500H13M1 5.500H8M1 8.500H11M1 11.500H7" /></div>
            <div className="-ml-px flex h-[22px] w-[24px] items-center justify-center border border-[#b5b5b5] bg-[#d0d0d0]"><Lines d="M1 2.500H13M3.500 5.500H10.500M2 8.500H12M4 11.500H10" /></div>
            <span className="ml-[5px] pt-px text-[10px]">&lt;仅浏览器中有效&gt;</span>
          </div>
          <div className="ml-[79px] mt-[6px] flex h-4 w-[39px] shrink-0 border border-[#b5b5b5] bg-[#d0d0d0]"><div className="flex w-[25px] justify-center border-r border-[#b5b5b5] pt-[3px]"><svg width="9" height="6"><path d="M4.500 0L9 5H0Z" fill="#666" /></svg></div></div>
        </div>
        <div className="flex w-[236px] shrink-0 flex-col pt-[45px]">
          <div className="flex h-[12px] items-center"><div className="h-px w-1 bg-[#b5b5b5]" /><span className="px-1 pt-[2px]">草图/页面效果</span><div className="h-px flex-1 bg-[#b5b5b5]" /></div>
          <div className="-mt-[6px] flex h-[30px] shrink-0 items-start border-x border-[#b5b5b5] pl-2 pt-[16px]">
            <Slot c="w-[79px] pt-[5px]">草图</Slot>
            <div className="h-5 w-[35px] border border-[#b5b5b5] bg-white pl-[3px] pt-[4px]">0</div>
            <div className="ml-[7px] h-4 w-4 rounded-[4px] border border-[#b8b8b8] bg-[#f4f4f4]" />
            <div className="mt-[6px] h-1 w-[79px] bg-[#b5b5b5]" />
          </div>
        </div>
        <div className="ml-auto w-[15px] border-l border-[#e2e2e2] pl-[2px] pt-1"><div className="h-[21px] w-2 rounded-full bg-[#c1c1c1]" /></div>
      </div>
    </div>
  );
}

/* ---------- right column ---------- */

function EventRow({ children }: Kids) {
  return (
    <div className="flex h-[19px] items-center pl-5">
      <Ico b={[0, 0, 18, 18]}>
        <path d="M0 0H15V7H0Z" fill={GREEN} /><path d="M8 2.500V14L10.500 11.500L12.500 16L14.500 15L12.700 11H16Z" fill={DARK} stroke="#f3f3f3" strokeWidth=".7" />
      </Ico>
      <span className="-mt-px ml-[5px]">{children}</span>
    </div>
  );
}

function RightColumn() {
  return (
    <div className="flex w-[251px] shrink-0 flex-col border-l border-[#b5b5b5] bg-[#f3f3f3] text-[10.200px] text-black">
      <TitleBar>元件交互与说明</TitleBar>
      <div className="flex h-[190px] shrink-0 flex-col">
        <div className="flex h-5 items-center pl-[5px] pt-[4px]"><b className="text-[10.800px] font-semibold">Image</b>&nbsp;<span className="font-medium">名称</span></div>
        <div className="mx-[5px] h-[22px] border border-[#b5b5b5] bg-white" />
        <div className="h-[6px]" />
        <TabLine><Tab w="w-[46px]" on>交互</Tab><Tab w="-ml-px w-[45px]">说明</Tab></TabLine>
        <div className="flex h-6 items-center gap-[7px] pl-[10px] pt-px text-[#0070b0]"><span>添加用例...</span><span>创建连接...</span></div>
        <EventRow>鼠标单击时</EventRow><EventRow>鼠标移入时</EventRow><EventRow>鼠标移出时</EventRow>
        <div className="pl-[10px] pt-[12px] text-[#0070b0]">更多事件&gt;&gt;&gt;</div>
      </div>
      <div className="h-px shrink-0 bg-[#b5b5b5]" />
      <TitleBar>元件属性与样式</TitleBar>
      <div className="h-[5px] shrink-0" />
      <TabLine><Tab w="w-[46px]" on>属性</Tab><Tab w="-ml-px w-[45px]">样式</Tab></TabLine>
      <div className="flex h-[166px] shrink-0">
        <div className="flex-1">
          <div className="flex h-[30px] items-center pl-[5px] text-[12px] font-semibold tracking-[0.300px] text-[#222]">
            <svg className="mr-[6px] block" width="9" height="8"><path d="M0 0H9L4.500 7.500Z" fill="#858585" /></svg><span className="pt-px">Image (1)</span>
          </div>
          <div className="flex h-10 items-center gap-[5px] pl-[15px]">
            <div className="size-10 border border-black bg-white" />
            <div className="-mt-[2px] flex h-[19px] w-[45px] items-center justify-center border border-[#b5b5b5] bg-[#d3d3d3] pt-[2px]">导入</div>
            <div className="-mt-[2px] flex h-[19px] w-[45px] items-center justify-center border border-[#b5b5b5] bg-[#d3d3d3] pt-[2px]">清空</div>
          </div>
          <div className="flex h-[23px] items-center pl-[15px] pt-[4px]">交互样式设置</div>
          <div className="flex flex-col pl-[25px] pt-px text-[#0070b0]">
            <div className="flex h-[19px] items-center">鼠标悬停</div>
            <div className="flex h-[27px] items-center">鼠标按下</div>
            <div className="flex h-[19px] items-center">选中</div>
          </div>
        </div>
        <div className="w-[15px] border-l border-[#e2e2e2] bg-[#fafafa] pl-[3px] pt-[3px]"><div className="h-[75px] w-2 rounded-full bg-[#c1c1c1]" /></div>
      </div>
      <div className="h-px shrink-0 bg-[#b5b5b5]" />
      <TitleBar>元件管理</TitleBar>
      <Bar>
        <ToolIcon faded><path d="M-7 -6H3V-2H-7Z" fill={DARK} /><path d="M-4 -2V5H-1M2 0H8M5 -3V3" stroke={DARK} /><path d="M-1 4H9V8H-1Z" fill={BLUE} /></ToolIcon>
        <ToolIcon faded><path d="M-7.500 -6.500H-1L1.500 -4V5H-7.500ZM-1.500 -2.500H4L7.500 1V7.500H-1.500Z" stroke={DARK} fill="#eee" /><path d="M-5 -3H0M-5 0H-2M1 2H5M1 5H6" stroke={BLUE} /></ToolIcon>
        <Up /><Down off /><Delete />
        <ToolIcon><path d="M-6.500 -6.500H8L3 0V7H-1.500V0Z" fill={BLUE} /></ToolIcon>
        <Find />
      </Bar>
      <div className="flex h-[19px] items-center pl-1 text-[11px] font-bold"><MiniPage /><span className="-mt-[3px] ml-[9px]">index</span></div>
      <div className="flex h-[19px] items-center pl-[43px] text-[11px] text-[#ff0018]">(Image)</div>
      <div className="flex h-[19px] items-center bg-[#cbebf8] pl-[43px] text-[11px]">(Image)</div>
    </div>
  );
}

/* ---------- dock ---------- */

function App48({ running, children }: Kids & { running?: boolean }) {
  return (
    <svg className="block shrink-0" width="48" height="57" viewBox="-24 -27 48 57" fill="none">
      {children}
      {running && <circle cx="0" cy="26" r="2" fill="#0c0c1c" />}
    </svg>
  );
}

const PETALS = ['#f7a12b', '#f2c52e', '#a8c83c', '#58b36b', '#6bb2e0', '#8a78c4', '#c8569a', '#ee4a3c'];

function Dock() {
  return (
    <div className="mx-auto flex h-[57px] w-[1180px] shrink-0 rounded-t-[4px] bg-linear-to-r from-[#74707a] via-[#6b6e7e] to-[#878ba3] pl-[3px]">
      <App48 running>
        <path d="M-19 -18H19V18H-19Z" fill="#e9f1f8" /><path d="M-19 -18H1Q-4 -6 -3 3H3Q3 11 5 18H-19Z" fill="#14a0f5" />
        <path d="M-9 -8V-4M9 -8V-4M-11 6Q0 14 11 6" stroke="#1b2a40" strokeWidth="1.800" strokeLinecap="round" />
        <path d="M1 -18Q-4 -6 -3 3H3" stroke="#1b2a40" strokeWidth=".6" />
      </App48>
      <App48>
        <circle r="19.500" fill="#251a48" stroke="#e6e6ee" strokeWidth="1.500" /><path d="M-18 4Q-9 -6 0 3Q9 -4 18 4Q14 18.500 0 18.500Q-14 18.500 -18 4Z" fill="#5fc8f0" />
        <path d="M-18 3Q-8 -8 1 5Q-7 10 -18 3Z" fill="#ee4fb0" opacity=".8" /><path d="M-16 9Q-6 3 0 9Q7 3 16 9Q10 15 0 11Q-10 15 -16 9Z" fill="#fff" />
      </App48>
      <App48>
        <circle r="19.500" fill="#aeb7b9" stroke="#e4e8ea" strokeWidth="1.500" />
        <path d="M13 -12Q2 -11 -4 -1L-14 2L-9 4L-12 11L-8 8L-6 9L-3 5L1 11L4 3Q12 -2 13 -12Z" fill="#3f454b" /><circle cx="5" cy="-4" r="2.500" fill="#c8cfd2" />
      </App48>
      <App48 running>
        <circle r="19.500" fill="#eef2f5" /><circle r="17.500" fill="#1c9ff0" /><circle r="15" stroke="#bfe6fb" strokeWidth="1.500" strokeDasharray=".7 1.500" />
        <path d="M12 -12L3 3L-3 -3Z" fill="#f03a30" /><path d="M-11 12L-3 -3L3 3Z" fill="#f6f6f6" />
      </App48>
      <App48>
        <g transform="rotate(-7)"><path d="M-14 -18H14V18H-14Z" fill="#f4f6f8" stroke="#f4f6f8" strokeDasharray="2 1.500" strokeWidth="2" /><path d="M-12 -16H12V16H-12Z" fill="#5fa8e6" />
        <path d="M-9 -13Q-3 -12 -1 -3Q7 1 12 7L4 9Q-1 6 -4 9L-8 8Q-4 3 -6 -2Q-9 -7 -9 -13Z" fill="#6a4a30" /><path d="M-1 1L5 6L0 7Z" fill="#eee" /></g>
        <circle cx="12" cy="11" r="8" stroke="#5c6a7c" strokeWidth="1" opacity=".7" />
      </App48>
      <App48>
        <g transform="rotate(-6)"><path d="M12 -16H17V-9H12Z" fill="#d6d6d6" /><path d="M12 -8H17V-2H12Z" fill="#3aa8d8" /><path d="M12 -1H17V5H12Z" fill="#40c060" /><path d="M12 6H17V12H12Z" fill="#f09a30" /><rect x="-17" y="-18" width="31" height="38" rx="3" fill="#a87840" /><path d="M-14 -18V20" stroke="#8a5f30" /><circle cx="1" cy="-2" r="9" stroke="#8a5f30" strokeWidth="1.500" /><circle cx="1" cy="-4" r="3.500" fill="#8a5f30" /><path d="M-5 4Q1 -2 7 4Q1 9 -5 4Z" fill="#8a5f30" /></g>
      </App48>
      <App48>
        <g transform="rotate(-6)"><rect x="-16" y="-16" width="33" height="35" rx="2" fill="#77797e" /><rect x="-16" y="-18" width="31" height="35" rx="2" fill="#fafafa" /><path d="M-16 -18H15V-7H-16Z" fill="#ee3b40" />
        <text x="0" y="-9.500" textAnchor="middle" fontSize="8" fill="#fff">3月</text><text x="0" y="11.500" textAnchor="middle" fontSize="20" fill="#222" letterSpacing="-.5">17</text></g>
      </App48>
      <App48>
        <g transform="rotate(-7)"><path d="M-16 -18H16V19H-16Z" fill="#fbfbf6" /><path d="M-16 -18H16V-11H-16Z" fill="#f9cb3e" /><path d="M-16 -6H16M-16 -1H16M-16 4H16M-16 9H16M-16 14H16" stroke="#d4d4d0" /></g>
      </App48>
      <App48>
        <g transform="rotate(-6)"><rect x="-15" y="-18" width="31" height="38" rx="3" fill="#c8c8cc" /><rect x="-15" y="-19" width="30" height="37" rx="3" fill="#fafafa" /><circle cx="-10" cy="-12" r="2.500" fill="#f28a30" /><circle cx="-10" cy="-4" r="2.500" fill="#2f9cf0" /><circle cx="-10" cy="4" r="2.500" fill="#4cc85a" /><circle cx="-10" cy="12" r="2.500" fill="#b868e0" /><path d="M-5 -12H12M-5 -4H12M-5 4H12M-5 12H12" stroke="#d8d8d8" /></g>
      </App48>
      <App48>
        <g transform="rotate(-7)"><path d="M-17 -17H16V16H-17Z" fill="#f2eee2" /><path d="M-17 -14H16V-9H-17Z" fill="#58b85a" /><path d="M-17 -7H9V-3H-17Z" fill="#3a9ee0" /><path d="M-17 4L-4 0L12 16H0Z" fill="#f6d870" /><rect x="-10" y="-3" width="10" height="8" rx="2" fill="#4a78d0" /></g>
        <circle cx="11" cy="8" r="9.500" fill="#f0f2f4" stroke="#c8c8c8" /><circle cx="11" cy="8" r="6" stroke="#5c6878" /><text x="11" y="10.500" textAnchor="middle" fontSize="6.500" fill="#333">3D</text><circle cx="11" cy="0" r="1" fill="red" />
      </App48>
      <App48>
        <circle r="20" fill="#f4f4f2" />
        {PETALS.map((c, i) => <rect key={c} x="-5" y="-17" width="10" height="15.500" rx="5" fill={c} opacity=".85" transform={`rotate(${i * 45})`} />)}
      </App48>
      <App48>
        <path d="M0 -18C11 -18 19 -12 19 -3C19 6 11 12 0 12L-6 11L-13 17L-12 8C-26 0 -18 -18 0 -18Z" fill="#2d9cf2" />
        <ellipse cx="8" cy="8" rx="12" ry="9.500" fill="#f2f6fa" /><path d="M12 15L18 19L16 12Z" fill="#f2f6fa" /><circle cx="3" cy="8" r="1.800" fill="#2a5fa0" /><circle cx="8" cy="8" r="1.800" fill="#2a5fa0" /><circle cx="13" cy="8" r="1.800" fill="#2a5fa0" />
      </App48>
      <App48>
        <rect x="-19" y="-17" width="36" height="32" rx="4" fill="#12d65c" /><rect x="-13" y="-9" width="17" height="15" rx="3" fill="#fff" /><path d="M5 -4L12 -8V6L5 2Z" fill="#fff" />
        <circle cx="11" cy="8" r="10" fill="#f2f4f2" /><path d="M6 3L8 2L10 5L9 7Q10 10 13 11L15 10L17 12L16 14Q6 13 6 3Z" fill="#20b850" />
      </App48>
      <App48>
        <circle r="19" fill="#f5f3f8" stroke="#e858b0" strokeWidth="1.800" /><path d="M-19 3A19 19 0 0 0 19 3" stroke="#40b0f0" strokeWidth="1.800" />
        <path d="M-5 9V-10L8 -13V6" stroke="#e04a90" strokeWidth="2.500" /><path d="M-5 -8L8 -11" stroke="#f05068" strokeWidth="4" /><ellipse cx="-7.500" cy="9" rx="4" ry="3.200" fill="#7060e8" /><ellipse cx="5.500" cy="6.500" rx="4" ry="3.200" fill="#7060e8" />
      </App48>
      <App48>
        <circle r="19.500" fill="#f0782a" stroke="#e4e0de" strokeWidth="1.500" /><path d="M0 -6Q-6 -11 -13 -8V8Q-6 6 0 10Q6 6 13 8V-8Q6 -11 0 -6Z" fill="#f8f4f0" /><path d="M0 -6V10" stroke="#d0a890" />
      </App48>
      <App48>
        <circle r="19.500" fill="#1590f2" stroke="#dfe6ee" strokeWidth="1.500" /><path d="M1 -12L-9 9M-1 -12L10 9M-13 3H13" stroke="#fff" strokeWidth="3" strokeLinecap="round" />
        <circle cx="14" cy="-14" r="8.500" fill="#f5393c" /><text x="14" y="-10.500" textAnchor="middle" fontSize="10" fill="#fff">3</text>
      </App48>
      <App48>
        <rect x="-19.500" y="-18" width="39" height="36" rx="2" fill="#a3b1b8" /><circle r="16" fill="#2e3134" /><circle r="12.500" stroke="#a8acb0" strokeWidth="2.500" /><circle r="15" stroke="#a8acb0" strokeWidth="2.500" strokeDasharray="1.500 1.500" /><path d="M0 0L-12 0M0 0L6 -11M0 0L6 11" stroke="#a8acb0" strokeWidth="2.200" /><circle r="3" fill="#a8acb0" />
      </App48>
      <App48>
        <rect x="-19" y="-17" width="38" height="34" fill="#202124" stroke="#aeb0b4" strokeWidth="1.500" /><text x="-16" y="-6" fontSize="9" fontWeight="700" fill="#fff" fontFamily="Liberation Mono">&gt;_</text>
      </App48>
      <App48>
        <circle r="20.500" fill="#f9cf50" /><path d="M0 0L-18 -10A20.500 20.500 0 0 1 18.500 -9H0Z" fill="#dd4b3e" /><path d="M0 0L-8 5L-18.500 -9A20.500 20.500 0 0 0 1 20.500L9 4Z" fill="#1fa05c" /><path d="M8 5L1 20.500A20.500 20.500 0 0 0 18.500 -9H0Z" fill="#fbd058" />
        <circle r="9.500" fill="#fff" /><circle r="7.500" fill="#4486f0" />
      </App48>
      <App48 running>
        <path d="M-12 0Q-18 6 -18 13L-12 10ZM12 0Q18 6 18 13L12 10Z" fill="#111" /><ellipse cy="6" rx="13.500" ry="14" fill="#111" /><ellipse cy="9" rx="10" ry="10.500" fill="#fff" /><ellipse cy="-8" rx="11.500" ry="12.500" fill="#111" /><ellipse cx="-3.500" cy="-12" rx="2.500" ry="3.800" fill="#fff" /><ellipse cx="3.500" cy="-12" rx="2.500" ry="3.800" fill="#fff" /><circle cx="-3" cy="-12" r="1.200" fill="#111" /><circle cx="3" cy="-12" r="1.200" fill="#111" /><ellipse cy="-5" rx="7" ry="2.500" fill="#f7a828" />
        <path d="M-12 -2Q0 4 12 -2L13 3Q6 6 -2 6V9H-8V4L-13 2Z" fill="#e5262c" /><ellipse cx="-7" cy="19" rx="6" ry="2" fill="#f7a828" /><ellipse cx="7" cy="19" rx="6" ry="2" fill="#f7a828" />
        <rect x="3" y="-23" width="21" height="17" rx="8.500" fill="#f5393c" /><text x="13.500" y="-11.500" textAnchor="middle" fontSize="8.500" fill="#fff">99+</text>
      </App48>
      <App48 running>
        <rect x="-20" y="-21" width="40" height="40" rx="8" fill="#f0201c" /><path d="M7 -14Q0 -17 0 -10L3 3Q3 8 -1 8Q-5 7 -5 3Q-5 -3 2 -4Q11 -4 12 4Q11 13 0 13Q-12 12 -12 0Q-12 -7 -6 -10" stroke="#fff" strokeWidth="2.800" strokeLinecap="round" />
      </App48>
      <App48 running>
        <path d="M-20 -20H20V-12H-20Z" fill="#8cc857" /><path d="M-20 -12H20V-10H-20Z" fill="#77787e" /><path d="M-20 -8H-8V20H-20Z" fill="#05a0dc" /><path d="M-4 -8H20V20H-4Z" fill="#f7257f" /><path d="M-20 -8H-8V2L-20 6ZM-4 -8H20V-5L-4 1Z" fill="#fff" opacity=".15" />
      </App48>
      <svg className="block" width="22" height="57"><path d="M11.500 8V49" stroke="#4c4e60" /></svg>
      <App48>
        <path d="M-22 -15H22V14H-22Z" fill="#f4f4f4" /><path d="M-22 -15H22V-12H-22Z" fill="#e03030" /><path d="M-21 -9H-14M-21 -6H-15M-21 -3H-14" stroke="#ccc" />
        <path d="M-12 -6H-5V1H-12Z" fill="#5a8038" /><path d="M-3 -6H4V1H-3Z" fill="#34424c" /><path d="M6 -6H12V1H6Z" fill="#a83040" /><path d="M14 -6H20V1H14Z" fill="#203858" /><path d="M-12 4H-5V10H-12Z" fill="#222" /><path d="M-3 4H4V10H-3Z" fill="#b04050" /><path d="M6 4H12V10H6ZM-22 8H-18V12H-22Z" fill="#304060" />
        <rect x="6" y="5" width="15" height="15" rx="3" fill="#ee2420" /><circle cx="13.500" cy="13" r="4" stroke="#fff" strokeWidth="1.300" /><path d="M15 7L13 8L14 14" stroke="#fff" />
      </App48>
      <App48>
        <path d="M-16 -16L-12 19Q0 23 12 19L16 -16Z" fill="#cfd1d3" /><path d="M-12 -14L-9 17M-4 -12L-3 19M5 -12L4 19M12 -14L9 17" stroke="#dcdddf" strokeWidth="2.500" /><ellipse cy="-16" rx="16" ry="4.500" fill="#e4e6e8" /><path d="M-12 -16L-6 -20L0 -17L6 -21L12 -15Q0 -12 -12 -16Z" fill="#3e5058" /><path d="M-5 -18L0 -15L4 -19" stroke="#fff" strokeWidth="2" />
      </App48>
    </div>
  );
}

export default function App() {
  return (
    <div className="relative flex h-[800px] w-[1280px] flex-col overflow-hidden whitespace-nowrap bg-[#262830] font-['Inter','Noto_Sans_CJK_SC',sans-serif] leading-none">
      <svg className="absolute left-0 top-0" width="1280" height="800">
        <path d="M0 0H1280V60H0Z" fill="#9a7074" />
        <path d="M0 735H50V800H0Z" fill="#35333a" /><path d="M0 735L14 741L8 760L0 768Z" fill="#87817f" /><path d="M14 748L40 752L48 770L30 764Z" fill="#57545a" /><path d="M0 775L20 770L36 782L28 800H12Z" fill="#4e4b52" /><path d="M36 786L50 778V800H38Z" fill="#6b676c" /><path d="M6 778L16 790L8 796Z" fill="#88848a" />
        <path d="M1230 735H1280V800H1230Z" fill="#1d202a" /><path d="M1240 744L1252 748L1242 772Z" fill="#4b4b54" /><path d="M1262 742L1280 752V764L1268 758Z" fill="#3c3f4c" /><path d="M1236 782L1258 770L1270 786L1250 800Z" fill="#343846" />
      </svg>
      <div className="relative flex h-[743px] shrink-0 flex-col">
        <MenuBar />
        <div className="flex flex-1 flex-col overflow-hidden rounded-[6px] bg-white">
          <Toolbar />
          <FormatBar />
          <div className="flex min-h-0 flex-1">
            <LeftColumn />
            <Centre />
            <RightColumn />
          </div>
        </div>
      </div>
      <div className="relative"><Dock /></div>
    </div>
  );
}
